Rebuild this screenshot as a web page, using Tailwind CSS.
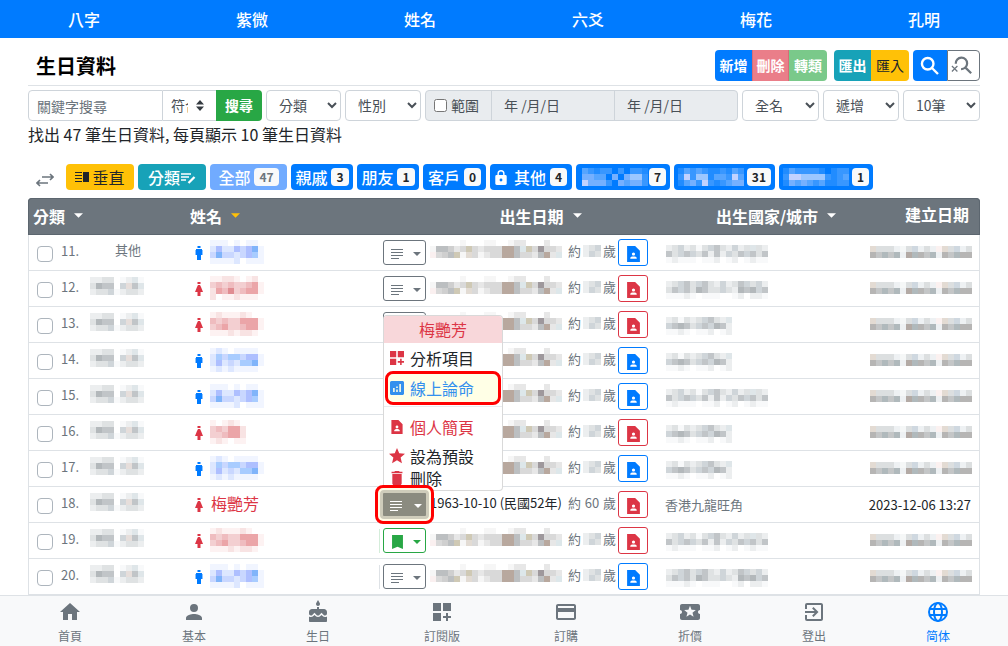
<!DOCTYPE html>
<html lang="zh-Hant">
<head>
<meta charset="utf-8">
<meta name="viewport" content="width=device-width, initial-scale=1">
<title>生日資料</title>
<script src="https://cdn.jsdelivr.net/npm/@tailwindcss/browser@4"></script>
</head>
<body class="bg-white pb-13 font-['Noto_Sans_CJK_TC','Noto_Sans',sans-serif] text-[#212529]">

<!-- Icon sprite -->
<svg class="hidden" aria-hidden="true">
  <symbol id="lines" viewBox="0 0 14 14"><path d="M1 2.500h12M1 5.500h12M1 8.500h12M1 11.500h8" stroke="currentColor" fill="none" shape-rendering="crispEdges"/></symbol>
  <symbol id="caret" viewBox="0 0 10 5"><path d="M0 0h10L5 5z"/></symbol>
  <symbol id="person-page" viewBox="4 2 16 20"><path d="M14 2H4v20h16V8l-6-6zm-2 8c1.100 0 2 .9 2 2s-.9 2-2 2-2-.9-2-2 .9-2 2-2zm4 8H8v-.57c0-.81.48-1.530 1.220-1.850C10.070 15.210 11.010 15 12 15s1.930.21 2.780.58c.74.32 1.220 1.040 1.220 1.850V18z"/></symbol>
  <symbol id="male" viewBox="0 0 8 14"><path d="M2.500 0h3v2h-3zM1 3h6v6H6v5H2V9H1z"/><path d="M0 4h8v5H0z" opacity=".45"/></symbol>
  <symbol id="female" viewBox="0 0 8 14"><path d="M2.500 0h3v2h-3zM3 3h2l1 2 2 5H5.500v4h-3v-4H0l2-5z"/></symbol>
  <symbol id="dashboard" viewBox="3 3 18 18"><path d="M3 3h8v8H3zm10 0h8v8h-8zM3 13h8v8H3zm15 0h-2v3h-3v2h3v3h2v-3h3v-2h-3z"/></symbol>
  <symbol id="bookmark" viewBox="5 3 14 18"><path d="M5 3h14v18l-7-3-7 3z"/></symbol>
</svg>

<nav class="grid h-[38px] grid-cols-6 bg-[#007bff] text-base font-medium text-white">
  <a href="#" class="flex items-center justify-center">八字</a>
  <a href="#" class="flex items-center justify-center">紫微</a>
  <a href="#" class="flex items-center justify-center">姓名</a>
  <a href="#" class="flex items-center justify-center">六爻</a>
  <a href="#" class="flex items-center justify-center">梅花</a>
  <a href="#" class="flex items-center justify-center">孔明</a>
</nav>

<main class="px-7 pt-3">
  <header class="flex h-9 items-start justify-between border-b border-[#dee2e6]">
    <h1 class="pl-2 text-xl leading-8 font-bold text-black">生日資料</h1>
    <div class="flex h-[31px] text-sm font-bold text-white">
      <div class="mr-[7px] flex overflow-hidden rounded">
        <button class="w-[37px] bg-[#007bff] pb-[2px]">新增</button>
        <button class="w-[37px] border-x border-[#d86b78] bg-[#ea7e89] pb-[2px]">刪除</button>
        <button class="w-[38px] bg-[#7ac98a] pb-[2px]">轉類</button>
      </div>
      <div class="mr-1 flex overflow-hidden rounded">
        <button class="w-[37px] bg-[#17a2b8] pb-[2px]">匯出</button>
        <button class="w-[38px] bg-[#ffc107] pb-[2px] font-normal text-[#212529]">匯入</button>
      </div>
      <div class="flex">
        <button class="flex w-[34px] items-center justify-center rounded-l bg-[#007bff]" aria-label="搜尋"><svg class="size-[22px]" viewBox="0 0 24 24" fill="none" stroke="currentColor" stroke-width="2.600"><circle cx="9.500" cy="9.500" r="6.300"/><path d="M14.200 14.200l6.500 6.500"/></svg></button>
        <button class="flex w-[33px] items-center justify-center rounded-r border border-[#6c757d] pr-[3px] text-[#6c757d]" aria-label="清除搜尋"><svg class="size-[22px]" viewBox="0 0 24 24" fill="none" stroke="currentColor"><path d="M5.200 9.500A6.200 6.200 0 1 1 11 15.300M15.500 13.500l6.500 6.500" stroke-width="2.400"/><path d="M1 12l6 6M7 12l-6 6" stroke-width="1.300"/></svg></button>
      </div>
    </div>
  </header>

  <form class="mt-1 flex h-[31px] gap-1 text-sm text-[#495057]">
    <div class="flex w-[234px]">
      <input aria-label="關鍵字搜尋" placeholder="關鍵字搜尋" class="w-[135px] min-w-0 rounded-l border border-[#ced4da] px-2 placeholder:text-[#6c757d]">
      <div class="relative flex w-[53px]">
        <select aria-label="條件" class="w-full appearance-none border-y border-[#ced4da] bg-white pr-7 pb-[2px] pl-2"><option>符合</option></select>
        <svg class="pointer-events-none absolute top-[10px] right-3 h-[11px] w-2" viewBox="0 0 8 11" fill="#343a40"><path d="M0 4.500L4 0l4 4.500zM0 6.500h8L4 11z"/></svg>
      </div>
      <button class="flex-1 rounded-r bg-[#28a745] pb-[2px] font-bold text-white">搜尋</button>
    </div>
    <select aria-label="分類" class="w-[75px] rounded border border-[#ced4da] bg-white px-2 pb-[2px]"><option>分類</option></select>
    <select aria-label="性別" class="w-[76px] rounded border border-[#ced4da] bg-white px-2 pb-[2px]"><option>性別</option></select>
    <div class="flex min-w-0 flex-1 overflow-hidden rounded border border-[#ced4da] bg-[#e9ecef]">
      <label class="flex w-[66px] items-center gap-1 border-r border-[#ced4da] pb-px pl-2"><input type="checkbox" class="size-[13px]">範圍</label>
      <input aria-label="開始日期" placeholder="年 /月/日" class="min-w-0 flex-1 border-r border-[#ced4da] px-3 pb-[2px] placeholder:text-[#495057]">
      <input aria-label="結束日期" placeholder="年 /月/日" class="min-w-0 flex-1 px-3 pb-[2px] placeholder:text-[#495057]">
    </div>
    <select aria-label="姓名顯示" class="w-[77px] rounded border border-[#ced4da] bg-white px-2 pb-[2px]"><option>全名</option></select>
    <select aria-label="排序" class="w-[76px] rounded border border-[#ced4da] bg-white px-2 pb-[2px]"><option>遞增</option></select>
    <select aria-label="每頁筆數" class="w-[77px] rounded border border-[#ced4da] bg-white px-2 pb-[2px]"><option>10筆</option></select>
  </form>

  <p class="mt-px text-base leading-6">找出 47 筆生日資料, 每頁顯示 10 筆生日資料</p>

  <div class="mt-[18px] flex h-[26px] gap-1 text-base font-medium text-white">
    <button class="flex w-[34px] items-center pt-[6px] pl-2 text-[#6c757d]" aria-label="切換"><svg class="h-[14px] w-[18px]" viewBox="0 0 18 14" fill="none" stroke="currentColor" stroke-width="1.600"><path d="M6 4h11M14 1l3 3-3 3M12 10H1M4 7l-3 3 3 3"/></svg></button>
    <button class="flex w-[68px] items-center justify-center gap-[2px] rounded bg-[#ffc107] font-normal text-[#212529]"><svg class="h-3 w-[15px]" viewBox="0 0 15 12" fill="currentColor"><path d="M0 1h7v1H0zM0 4h7v1H0zM0 7h7v1H0zM0 10h7v1H0zM8 1h6v10H8z"/></svg>垂直</button>
    <button class="flex w-[68px] items-center justify-center rounded bg-[#17a2b8]">分類<svg class="h-4 w-4" viewBox="0 0 16 16" fill="none" stroke="currentColor" stroke-width="1.500"><path d="M1 5h10M1 8h8M1 11h5"/><path d="M8.500 14l6-6" stroke-width="2.300"/></svg></button>
    <button class="flex w-[77px] items-center justify-center gap-1 rounded bg-[#71abff]">全部<span class="rounded bg-[#f8f9fa] px-[5px] text-xs leading-[18px] font-bold text-[#6c757d]">47</span></button>
    <button class="flex w-[62px] items-center justify-center gap-1 rounded bg-[#007bff]">親戚<span class="rounded bg-[#f8f9fa] px-[5px] text-xs leading-[18px] font-bold text-[#212529]">3</span></button>
    <button class="flex w-[62px] items-center justify-center gap-1 rounded bg-[#007bff]">朋友<span class="rounded bg-[#f8f9fa] px-[5px] text-xs leading-[18px] font-bold text-[#212529]">1</span></button>
    <button class="flex w-[63px] items-center justify-center gap-1 rounded bg-[#007bff]">客戶<span class="rounded bg-[#f8f9fa] px-[5px] text-xs leading-[18px] font-bold text-[#212529]">0</span></button>
    <button class="flex w-[82px] items-center justify-center gap-1 rounded bg-[#007bff]"><svg class="mr-[3px] h-[15px] w-3" viewBox="4 1 16 21" fill="currentColor"><path d="M18 8h-1V6A5 5 0 0 0 7 6v2H6a2 2 0 0 0-2 2v10c0 1.100.9 2 2 2h12a2 2 0 0 0 2-2V10a2 2 0 0 0-2-2zm-6 9a2 2 0 1 1 0-4 2 2 0 0 1 0 4zM9 8V6a3 3 0 0 1 6 0v2z"/></svg>其他<span class="rounded bg-[#f8f9fa] px-[5px] text-xs leading-[18px] font-bold text-[#212529]">4</span></button>
    <button class="flex w-[94px] items-center justify-end gap-px rounded bg-[#007bff] pr-1" aria-label="分類七"><span data-mosaic="tagA"></span><span class="rounded bg-[#f8f9fa] px-[5px] text-xs leading-[18px] font-bold text-[#212529]">7</span></button>
    <button class="flex w-[101px] items-center justify-end gap-[3px] rounded bg-[#007bff] pr-1" aria-label="分類八"><span data-mosaic="tagB"></span><span class="rounded bg-[#f8f9fa] px-[5px] text-xs leading-[18px] font-bold text-[#212529]">31</span></button>
    <button class="flex w-[94px] items-center justify-end gap-[3px] rounded bg-[#007bff] pr-1" aria-label="分類九"><span data-mosaic="tagC"></span><span class="rounded bg-[#f8f9fa] px-[5px] text-xs leading-[18px] font-bold text-[#212529]">1</span></button>
  </div>

  <table class="mt-2 w-full table-fixed border-separate border-spacing-0 text-[13px] text-[#6c757d]">
    <colgroup><col class="w-[157px]"><col class="w-[194px]"><col class="w-[281px]"><col><col class="w-[130px]"></colgroup>
    <thead class="bg-[#6c757d] text-base text-white">
      <tr class="h-[37px]">
        <th class="rounded-tl border border-r-0 border-[#5c666f] pl-1 pb-[2px] text-left"><button class="flex items-center gap-[9px] font-bold">分類<svg class="h-[5px] w-[9px]" fill="currentColor"><use href="#caret"/></svg></button></th>
        <th class="border-y border-[#5c666f] pl-[5px] pb-[2px] text-left"><button class="flex items-center gap-[9px] font-bold">姓名<svg class="h-[5px] w-[9px] text-[#ffc107]" fill="currentColor"><use href="#caret"/></svg></button></th>
        <th class="border-y border-[#5c666f] pb-[2px] pl-[42px]"><button class="mx-auto flex items-center gap-[9px] font-bold">出生日期<svg class="h-[5px] w-[9px]" fill="currentColor"><use href="#caret"/></svg></button></th>
        <th class="border-y border-[#5c666f] pb-[2px] pl-[42px]"><button class="mx-auto flex items-center gap-[9px] font-bold">出生國家/城市<svg class="h-[5px] w-[9px]" fill="currentColor"><use href="#caret"/></svg></button></th>
        <th class="rounded-tr border border-l-0 border-[#5c666f] pr-[10px] pb-[5px] text-right">建立日期</th>
      </tr>
    </thead>
    <tbody id="rows"></tbody>
  </table>
</main>

<nav class="fixed inset-x-0 bottom-0 grid h-[51px] grid-cols-8 border-t border-[#dee2e6] bg-[#f8f9fa] px-2 text-xs text-[#6c757d]">
  <a href="#" class="flex flex-col items-center gap-[6px] pt-1"><svg class="size-6" viewBox="0 0 24 24" fill="currentColor"><path d="M10 20v-6h4v6h5v-8h3L12 3 2 12h3v8z"/></svg><span class="leading-3">首頁</span></a>
  <a href="#" class="flex flex-col items-center gap-[6px] pt-1"><svg class="size-6" viewBox="0 0 24 24" fill="currentColor"><path d="M12 12a4 4 0 1 0 0-8 4 4 0 0 0 0 8zm0 2c-2.670 0-8 1.340-8 4v2h16v-2c0-2.660-5.330-4-8-4z"/></svg><span class="leading-3">基本</span></a>
  <a href="#" class="flex flex-col items-center gap-[6px] pt-1"><svg class="size-6" viewBox="0 0 24 24" fill="currentColor"><path d="M12 6c1.110 0 2-.9 2-2 0-.38-.1-.73-.29-1.030L12 0l-1.710 2.970c-.19.3-.29.65-.29 1.030 0 1.100.9 2 2 2zm4.600 9.990l-1.070-1.070-1.080 1.070c-1.300 1.300-3.580 1.310-4.890 0l-1.070-1.070-1.090 1.070C6.750 16.640 5.880 17 4.960 17c-.73 0-1.400-.23-1.960-.61V21c0 .55.45 1 1 1h16c.55 0 1-.45 1-1v-4.610c-.56.38-1.230.61-1.960.61-.92 0-1.790-.36-2.440-1.010zM18 9h-5V7h-2v2H6c-1.660 0-3 1.340-3 3v1.540c0 1.080.88 1.960 1.960 1.960.52 0 1.020-.2 1.380-.57l2.140-2.130 2.130 2.130c.74.74 2.030.74 2.770 0l2.140-2.130 2.130 2.130c.37.37.86.57 1.380.57 1.080 0 1.960-.88 1.960-1.960V12C21 10.340 19.660 9 18 9z"/></svg><span class="leading-3">生日</span></a>
  <a href="#" class="flex flex-col items-center gap-[6px] pt-1"><svg class="size-6 p-[3px]" fill="currentColor"><use href="#dashboard"/></svg><span class="leading-3">訂閱版</span></a>
  <a href="#" class="flex flex-col items-center gap-[6px] pt-1"><svg class="size-6" viewBox="0 0 24 24" fill="currentColor"><path d="M20 4H4c-1.110 0-1.990.89-1.990 2L2 18c0 1.110.89 2 2 2h16c1.110 0 2-.89 2-2V6c0-1.110-.89-2-2-2zm0 14H4v-6h16v6zm0-10H4V6h16v2z"/></svg><span class="leading-3">訂購</span></a>
  <a href="#" class="flex flex-col items-center gap-[6px] pt-1"><svg class="size-6" viewBox="0 0 24 24" fill="currentColor"><path d="M20 12c0-1.100.9-2 2-2V6c0-1.100-.9-2-2-2H4c-1.100 0-1.990.9-1.990 2v4c1.100 0 1.990.9 1.990 2s-.89 2-2 2v4c0 1.100.9 2 2 2h16c1.100 0 2-.9 2-2v-4c-1.100 0-2-.9-2-2zm-4.420 4.800L12 14.500l-3.580 2.300 1.080-4.120-3.290-2.690 4.240-.25L12 5.800l1.540 3.950 4.240.25-3.290 2.690 1.090 4.110z"/></svg><span class="leading-3">折價</span></a>
  <a href="#" class="flex flex-col items-center gap-[6px] pt-1"><svg class="size-6" viewBox="0 0 24 24" fill="currentColor"><path d="M10.090 15.590L11.500 17l5-5-5-5-1.410 1.410L12.670 11H3v2h9.670l-2.580 2.590zM19 3H5a2 2 0 0 0-2 2v4h2V5h14v14H5v-4H3v4a2 2 0 0 0 2 2h14c1.100 0 2-.9 2-2V5c0-1.100-.9-2-2-2z"/></svg><span class="leading-3">登出</span></a>
  <a href="#" class="flex flex-col items-center gap-[6px] pt-1 text-[#007bff]"><svg class="size-6" viewBox="0 0 24 24" fill="none" stroke="currentColor" stroke-width="2"><circle cx="12" cy="12" r="9"/><ellipse cx="12" cy="12" rx="4" ry="9"/><path d="M4 9h16M4 15h16"/></svg><span class="leading-3">简体</span></a>
</nav>

<template id="menu">
  <div class="absolute bottom-[26px] left-0 z-10 h-44 w-[120px] overflow-hidden rounded border border-black/15 bg-white text-left text-base text-[#212529]">
    <div class="h-[27px] bg-[#f8d7da] text-center leading-[26px] text-[#dc3545]">梅艷芳</div>
    <a href="#" class="flex h-7 items-center gap-[6px] pt-[2px] pl-[6px]"><svg class="size-[14px] text-[#dc3545]" fill="currentColor"><use href="#dashboard"/></svg>分析項目</a>
    <a href="#" class="mx-px flex h-[34px] items-center gap-[6px] rounded-lg border-3 border-[#ff0000] bg-[#ffffe6] pl-[2px] text-[#3390ee]"><svg class="size-[14px]" viewBox="3 3 18 18" fill="currentColor"><path d="M19 3H5a2 2 0 0 0-2 2v14c0 1.100.9 2 2 2h14c1.100 0 2-.9 2-2V5c0-1.100-.9-2-2-2zM9 17H7v-5h2v5zm4 0h-2v-3h2v3zm0-5h-2v-2h2v2zm4 5h-2V7h2v10z"/></svg>線上論命</a>
    <hr class="my-px border-[#e9ecef]">
    <a href="#" class="flex h-[37px] items-center gap-[6px] pl-[6px] text-[#dc3545]"><svg class="h-[14px] w-[14px]" fill="currentColor"><use href="#person-page"/></svg>個人簡頁</a>
    <a href="#" class="flex h-[22px] items-center gap-[5px] pl-[5px]"><svg class="size-4 text-[#dc3545]" viewBox="2 2 20 20" fill="currentColor"><path d="M12 17.270L18.180 21l-1.640-7.030L22 9.240l-7.190-.61L12 2 9.190 8.630 2 9.240l5.460 4.730L5.820 21z"/></svg>設為預設</a>
    <a href="#" class="flex h-[22px] items-center gap-[6px] pl-[6px]"><svg class="h-[14px] w-[14px] text-[#dc3545]" viewBox="5 3 14 18" fill="currentColor"><path d="M6 19c0 1.100.9 2 2 2h8c1.100 0 2-.9 2-2V7H6v12zM19 4h-3.500l-1-1h-5l-1 1H5v2h14V4z"/></svg>刪除</a>
  </div>
</template>

<script>
// Pixelated placeholders for private values; each letter is one 6px cell.
const tones = {
  gray: { a: '#f8f9fa', b: '#eceeef', c: '#dfe2e3', d: '#cfd5d9', e: '#c1c5c8', f: '#b3b8bb', r: '#fbf0f0', p: '#e6dedb', w: '#dfe6e9' },
  date: { a: '#f6f6f6', b: '#e7e7e7', c: '#d9d9d9', d: '#cfcfcf', e: '#bcbfc1', f: '#9e989c', r: '#faf0f0', p: '#cfc9b5', w: '#dde7ea', t: '#b8a89e', s: '#e2dbd3' },
  made: { a: '#f5f7f7', b: '#eef1f3', c: '#dcdfe0', d: '#cfd8e0', e: '#b6b5b4', f: '#b0b9bc', g: '#c4c6c7', s: '#e3dbd3', r: '#fbf1f0', t: '#b3aaa5' },
  blue: { a: '#f1f5ff', b: '#dde7ff', c: '#c9d7ff', d: '#aebfff', e: '#a8ccff', f: '#80b4fa' },
  red: { a: '#fdf2f2', b: '#f8e3e3', c: '#f3cfd1', d: '#efbcbf', e: '#eba5a8', f: '#e08d92' },
  tag: { a: '#218cff', b: '#3897ff', c: '#56a5ff', d: '#75b0ff', e: '#9cc7ff', f: '#c2d2ff' }
};
const patterns = {
  tagA: ['tag', 'cbabb.b.bba', 'ddcc.d.deeb', 'fdddb.dcddb'],
  tagB: ['tag', 'acbcbaabacb', 'bfbeeaccbfc', 'acdbfbabcdd'],
  tagC: ['tag', 'acbbbba.abb', 'bffeeeebabc', 'adcdcbcaabb'],
  cat: ['gray', 'bbcc.abwa', 'cfee.dpew', 'bccdabccb'],
  name0blue: ['blue', 'aaa.a.aa.', 'bdbbdcdfa', 'cfccbcdea', 'aaaab.aaa'],
  name1blue: ['blue', 'aba.aaaa.', 'beceecdda', 'bdbcbeefa', 'ababaaaa.'],
  name0red: ['red', 'aabba.ab.', 'cdcdccdea', 'bedfcdeea', 'b.aabaaa.'],
  name1red: ['red', 'abaaaba..', 'dcdcceeea', 'cdeccdeea', 'aaababba.'],
  shortred: ['red', 'a.aba.', 'cdceeb', 'ccdeeb', 'aba.aa'],
  date: ['date', '.....a...aa..abb...b..', 'aeedbcpcbcccttewpcfccb', 'rcdepascabcctteccbetbw'],
  age: ['gray', 'bcd', 'bdc'],
  long0: ['gray', 'bcdbcacdecbdbcwcb', 'ecdedcebebdcedece', 'abaaa.aab.ab.abaa'],
  long1: ['gray', 'bcdecdecbdbcedcdb', 'cedecfeccdcbfefde', 'aaaba.aaa..ab.bba'],
  short0: ['gray', 'bcacbcdecbw', 'defecdedfeb', 'aaba.aab.ab'],
  made: ['made', 'scccbacdbcbrscdbc', 'egfgfbtfegfbegfee']
};
function mosaic(key) {
  const [tone, ...lines] = patterns[key];
  const width = Math.max(...lines.map(l => l.length)) * 6;
  const cells = lines.flatMap((line, y) => [...line].map((c, x) =>
    c === '.' ? '' : `<rect x="${x * 6}" y="${y * 6}" width="6" height="6" fill="${tones[tone][c]}"/>`)).join('');
  return `<svg class="block shrink-0" width="${width}" height="${lines.length * 6}" shape-rendering="crispEdges" aria-hidden="true">${cells}</svg>`;
}
document.querySelectorAll('[data-mosaic]').forEach(el => { el.innerHTML = mosaic(el.dataset.mosaic); });

const people = [
  [11, 'blue', 'name0blue', 'long0'], [12, 'red', 'name0red', 'long1'], [13, 'red', 'name1red', 'short0'],
  [14, 'blue', 'name1blue', 'short0'], [15, 'blue', 'name0blue', 'long0'], [16, 'red', 'shortred', 'short0'],
  [17, 'blue', 'name1blue', 'short0'], [18, 'red', null, null], [19, 'red', 'name1red', 'long0'], [20, 'blue', 'name0blue', 'long1']
];
const lineButton = '<button class="flex h-[25px] w-[43px] items-center justify-between rounded-[3px] border border-[#6c757d] bg-white pt-[2px] pr-1 pl-[6px] text-[#6c757d]" aria-label="選單"><svg class="size-[14px]"><use href="#lines"/></svg><svg class="h-1 w-2" fill="currentColor"><use href="#caret"/></svg></button>';
const savedButton = '<button class="flex h-[25px] w-[43px] items-center justify-between rounded-[3px] border border-[#28a745] bg-white pt-[2px] pr-1 pl-2 text-[#28a745]" aria-label="選單"><svg class="h-[14px] w-[11px]" fill="currentColor"><use href="#bookmark"/></svg><svg class="h-1 w-2" fill="currentColor"><use href="#caret"/></svg></button>';
const openButton = '<div class="relative h-[25px] w-[43px]"><div class="absolute -inset-x-2 -inset-y-[7px] z-20 rounded-lg border-3 border-[#ff0000] bg-[#fffbe6] p-[2px]"><button class="flex h-full w-full items-center justify-between rounded border-3 border-[#cfccbb] bg-[#8b8b80] pt-[2px] pr-1 pl-[6px] text-white" aria-label="選單" aria-expanded="true"><svg class="size-[14px]"><use href="#lines"/></svg><svg class="h-1 w-2" fill="currentColor"><use href="#caret"/></svg></button></div>' + document.getElementById('menu').innerHTML + '</div>';

document.getElementById('rows').innerHTML = people.map(([n, color, name, place]) => {
  const text = color === 'blue' ? 'text-[#007bff]' : 'text-[#dc3545]';
  const border = color === 'blue' ? 'border-[#007bff]' : 'border-[#dc3545]';
  const button = n === 18 ? openButton : n === 19 ? savedButton : lineButton;
  const rule = n === 19 ? 'border-[#d4edda]' : n === 20 ? 'border-[#dee2e6]' : 'border-transparent';
  return `<tr class="h-9">
    <td class="border-b border-l border-[#dee2e6] p-0"><div class="flex h-[35px] items-center pl-2">
      <input type="checkbox" aria-label="選取 ${n}" class="mt-[3px] size-4 appearance-none rounded border border-[#adb5bd]">
      <span class="w-[37px] pb-[3px] pl-2">${n}.</span>
      <span class="pb-[6px]">${n === 11 ? '<span class="block pl-[25px]">其他</span>' : mosaic('cat')}</span></div></td>
    <td class="border-b border-[#dee2e6] p-0"><div class="flex h-[35px] items-center pl-[10px] ${text}">
      <svg class="mr-[7px] h-[14px] w-2" fill="currentColor"><use href="#${color === 'blue' ? 'male' : 'female'}"/></svg>
      ${name ? '<span class="pb-px">' + mosaic(name) + '</span>' : '<a href="#" class="pb-[3px] pl-px text-base">梅艷芳</a>'}</div></td>
    <td class="border-b border-[#dee2e6] p-0"><div class="flex h-[35px] items-center"><span class="h-6 w-1 border-l ${rule}"></span>${button}
      <span class="flex w-[142px] pl-1">${name ? '<span class="pb-[7px]">' + mosaic('date') + '</span>' : '<span class="pb-[3px] whitespace-nowrap text-[#212529]">1963-10-10 (民國52年)</span>'}</span>
      <span class="mr-[2px] flex w-12 items-center justify-between pb-[3px]"><span>約</span>${name ? mosaic('age') : '<span>60</span>'}<span>歲</span></span>
      <button class="flex h-[27px] w-[30px] items-center justify-center rounded-[3px] border bg-white pt-[2px] ${border} ${text}" aria-label="個人簡頁"><svg class="h-4 w-[13px]" fill="currentColor"><use href="#person-page"/></svg></button></div></td>
    <td class="border-b border-[#dee2e6] p-0 pl-[5px]">${place ? '<div class="pt-[3px] pl-px">' + mosaic(place) + '</div>' : '香港九龍旺角'}</td>
    <td class="border-r border-b border-[#dee2e6] p-0 pr-2 whitespace-nowrap text-[#212529]"><div class="flex justify-end">${name ? '<span class="-mr-px pb-px">' + mosaic('made') + '</span>' : '2023-12-06 13:27'}</div></td>
  </tr>`;
}).join('');
</script>
</body>
</html>
